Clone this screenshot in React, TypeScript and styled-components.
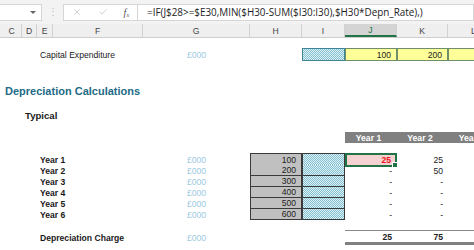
import styled, { createGlobalStyle } from "styled-components";
import { X, Check } from "lucide-react";

const GlobalStyle = createGlobalStyle`
  html, body { margin: 0; padding: 0; background: #fff; }
  body {
    width: 474px;
    height: 250px;
    overflow: hidden;
    font-family: "Liberation Sans", Arial, sans-serif;
    color: #1a1a1a;
  }
`;

// C D E F G H I J K L (plus 2px gutter on the left)
const COLS = "2px 20px 15px 16px 90px 107px 52px 43px 52px 51px 52px";

const FormulaBar = styled.div`
  display: flex;
  align-items: center;
  height: 24px;
  background: #f3f3f3;
`;

const NameBox = styled.div`
  width: 42px;
  height: 17px;
  box-sizing: border-box;
  background: #fff;
  border: 1px solid #d6d6d6;
  border-left: none;
  display: flex;
  align-items: center;
  justify-content: flex-end;
  padding-right: 5px;
`;

const Caret = styled.span`
  width: 0;
  height: 0;
  border-left: 3px solid transparent;
  border-right: 3px solid transparent;
  border-top: 3px solid #666;
`;

const Dots = styled.span`
  width: 21px;
  display: flex;
  justify-content: center;
  color: #b5b5b5;
  font-size: 10px;
  line-height: 1;
`;

const ActionBox = styled.div`
  width: 75px;
  height: 17px;
  box-sizing: border-box;
  background: #fff;
  border: 1px solid #d6d6d6;
  display: flex;
  align-items: center;
  justify-content: space-around;
  color: #a8a8a8;
`;

const Fx = styled.span`
  font-family: "Liberation Serif", serif;
  font-style: italic;
  font-size: 10px;
  color: #555;
  sub {
    font-size: 6px;
    vertical-align: -1px;
  }
`;

const FormulaInput = styled.div`
  flex: 1;
  height: 17px;
  box-sizing: border-box;
  background: #fff;
  border: 1px solid #d6d6d6;
  border-left: none;
  display: flex;
  align-items: center;
  padding-left: 9px;
  font-family: "Open Sans", "Noto Sans", sans-serif;
  font-size: 9.9px;
  color: #222;
  white-space: nowrap;
  overflow: hidden;
`;

const HeaderRow = styled.div`
  display: grid;
  grid-template-columns: ${COLS};
  height: 14px;
  background: #efefef;
  border-bottom: 1px solid #cfcfcf;
  box-sizing: border-box;
`;

const ColHead = styled.div<{ $sel?: boolean }>`
  display: flex;
  align-items: center;
  justify-content: center;
  font-size: 8.6px;
  color: ${p => (p.$sel ? "#217346" : "#444")};
  background: ${p => (p.$sel ? "#d4d4d4" : "transparent")};
  border-right: 1px solid #d2d2d2;
  border-bottom: ${p => (p.$sel ? "2px solid #217346" : "none")};
`;

const Row = styled.div<{ $h: number; $mt?: number }>`
  display: grid;
  grid-template-columns: ${COLS};
  height: ${p => p.$h}px;
  margin-top: ${p => p.$mt ?? 0}px;
`;

const Label = styled.div<{ $col: number; $bold?: boolean; $size?: number; $color?: string }>`
  grid-column: ${p => p.$col} / 6;
  display: flex;
  align-items: center;
  padding-left: 3px;
  white-space: nowrap;
  font-size: ${p => p.$size ?? 8.6}px;
  font-weight: ${p => (p.$bold ? 700 : 400)};
  color: ${p => p.$color ?? "#1a1a1a"};
`;

const Unit = styled.div`
  grid-column: 6;
  display: flex;
  align-items: center;
  justify-content: center;
  font-size: 8.6px;
  color: #9cc9de;
`;

type Kind = "grey" | "hatch" | "yellow" | "selected" | "plain" | "head" | "total";

const kindBg: Record<Kind, string> = {
  grey: "#c0c0c0",
  hatch: "repeating-conic-gradient(#86c1d2 0 25%, #dcf0f5 0 50%) 0 0 / 2px 2px",
  yellow: "#ffff99",
  selected: "#f5d2d2",
  plain: "transparent",
  head: "#808080",
  total: "transparent",
};

const Cell = styled.div<{ $col: number; $kind: Kind; $top?: boolean; $line?: string }>`
  position: relative;
  grid-column: ${p => p.$col};
  box-sizing: border-box;
  display: flex;
  align-items: center;
  justify-content: ${p => (p.$kind === "head" ? "center" : "flex-end")};
  padding-right: 5px;
  font-size: 8.6px;
  white-space: nowrap;
  background: ${p => kindBg[p.$kind]};
  color: ${p => (p.$kind === "head" ? "#fff" : p.$kind === "selected" ? "#e8141b" : "#222")};
  font-weight: ${p => (p.$kind === "head" || p.$kind === "selected" || p.$kind === "total" ? 700 : 400)};
  ${p =>
    p.$line
      ? `border: 1px solid ${p.$line}; border-top-width: ${p.$top ? 1 : 0}px;`
      : ""}
  ${p =>
    p.$kind === "selected"
      ? `border: 2px solid #217346; padding-right: 4px;
         &::after { content: ""; position: absolute; right: -3px; bottom: -3px;
           width: 4px; height: 4px; background: #217346; border: 1px solid #fff; }`
      : ""}
  ${p =>
    p.$kind === "total"
      ? `border-top: 1px solid #8a8a8a; border-bottom: 3px solid #808080;`
      : ""}
`;

const years = [
  { label: "Year 1", cost: 100, j: "25", k: "25" },
  { label: "Year 2", cost: 200, j: "-", k: "50" },
  { label: "Year 3", cost: 300, j: "-", k: "-" },
  { label: "Year 4", cost: 400, j: "-", k: "-" },
  { label: "Year 5", cost: 500, j: "-", k: "-" },
  { label: "Year 6", cost: 600, j: "-", k: "-" },
];

const colLetters = ["C", "D", "E", "F", "G", "H", "I", "J", "K", "L"];

export default function App() {
  return (
    <>
      <GlobalStyle />
      <FormulaBar>
        <NameBox>
          <Caret />
        </NameBox>
        <Dots>⋮</Dots>
        <ActionBox>
          <X size={10} strokeWidth={1.3} />
          <Check size={10} strokeWidth={1.3} />
          <Fx>
            f<sub>x</sub>
          </Fx>
        </ActionBox>
        <FormulaInput>=IF(J$28&gt;=$E30,MIN($H30-SUM($I30:I30),$H30*Depn_Rate),)</FormulaInput>
      </FormulaBar>

      <HeaderRow>
        <div />
        {colLetters.map(c => (
          <ColHead key={c} $sel={c === "J"}>
            {c}
          </ColHead>
        ))}
      </HeaderRow>

      <Row $h={13} $mt={10}>
        <Label $col={4}>Capital Expenditure</Label>
        <Unit>£000</Unit>
        <Cell $col={8} $kind="hatch" $line="#3f8598" $top />
        <Cell $col={9} $kind="yellow" $line="#6f8f6a" $top>100</Cell>
        <Cell $col={10} $kind="yellow" $line="#6f8f6a" $top>200</Cell>
        <Cell $col={11} $kind="yellow" $line="#6f8f6a" $top />
      </Row>

      <Row $h={15} $mt={22}>
        <Label $col={2} $bold $size={11} $color="#236b86">
          Depreciation Calculations
        </Label>
      </Row>

      <Row $h={14} $mt={10}>
        <Label $col={3} $bold $size={9.6}>
          Typical
        </Label>
      </Row>

      <Row $h={11} $mt={10}>
        <Cell $col={9} $kind="head">Year 1</Cell>
        <Cell $col={10} $kind="head">Year 2</Cell>
        <Cell $col={11} $kind="head">Year 3</Cell>
      </Row>

      {years.map((y, i) => (
        <Row key={y.label} $h={i === 0 ? 12 : 11} $mt={i === 0 ? 10 : 0}>
          <Label $col={4} $bold>
            {y.label}
          </Label>
          <Unit>£000</Unit>
          <Cell $col={7} $kind="grey" $line="#3a3a3a" $top={i === 0}>
            {y.cost}
          </Cell>
          <Cell $col={8} $kind="hatch" $line="#3a3a3a" $top={i === 0} />
          <Cell $col={9} $kind={i === 0 ? "selected" : "plain"}>{y.j}</Cell>
          <Cell $col={10} $kind="plain">{y.k}</Cell>
        </Row>
      ))}

      <Row $h={15} $mt={10}>
        <Label $col={4} $bold>
          Depreciation Charge
        </Label>
        <Unit>£000</Unit>
        <Cell $col={9} $kind="total">25</Cell>
        <Cell $col={10} $kind="total">75</Cell>
        <Cell $col={11} $kind="total" />
      </Row>
    </>
  );
}
